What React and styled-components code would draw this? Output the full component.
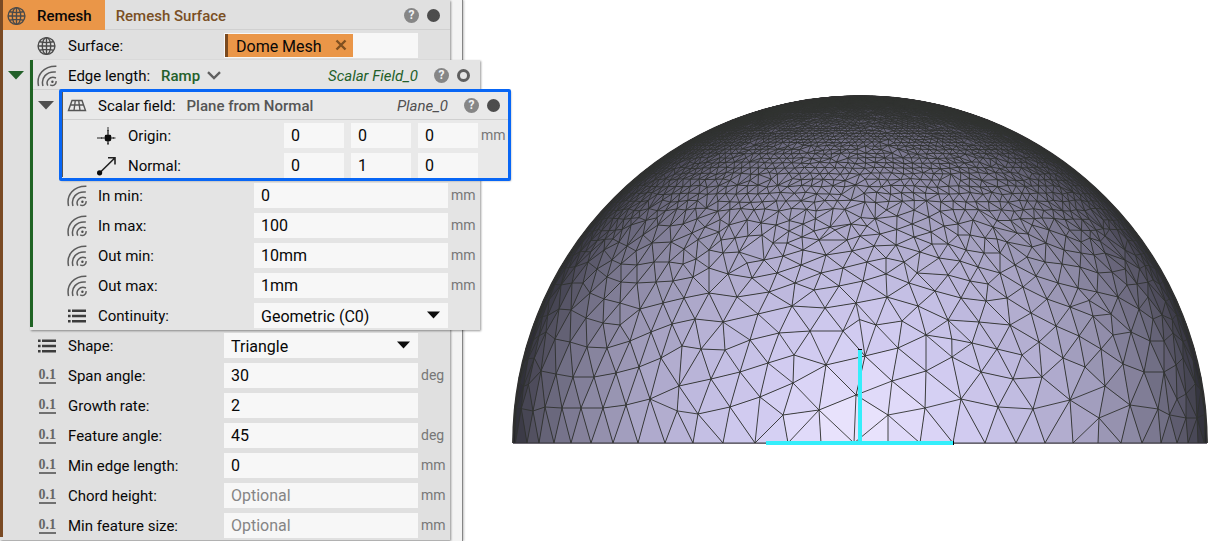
import React, { useId } from "react";
import styled, { createGlobalStyle } from "styled-components";

const GlobalStyle = createGlobalStyle`
  *, *::before, *::after { box-sizing: border-box; }
  body {
    margin: 0;
    background: #fff;
    color: #080808;
    font-family: Roboto, "Liberation Sans", sans-serif;
    font-size: 15px;
    line-height: 20px;
  }
  button, input, select { font: inherit; color: inherit; }
`;

/* ---------- layout ---------- */

const Page = styled.main`
  display: flex;
  min-height: 100vh;
  overflow: hidden;
`;

const Notebook = styled.section`
  flex: 0 0 auto;
  position: relative;
  z-index: 1;
  padding-right: 12px;
  background: #f3f3f3;
  border-right: 1px solid #858585;
  box-shadow: 1px 0 2px rgba(0, 0, 0, 0.25);
`;

const Viewport = styled.section`
  flex: 1 1 0;
  min-width: 0;

  svg { display: block; width: 100%; height: auto; }
`;

const Card = styled.div`
  position: relative;
  flex: 0 0 auto;
  width: 450px;
  padding-left: 3px;
  background:
    linear-gradient(${(p) => p.$accent}, ${(p) => p.$accent}) 0 0 / 3px calc(100% - 3px) no-repeat,
    ${(p) => p.$surface};
  box-shadow: 1px 1px 2px rgba(0, 0, 0, 0.4);
  ${(p) => p.$selected && "outline: 3px solid #0866f5; outline-offset: -2px; border-radius: 1px;"}
`;

const Nested = styled.div`
  display: flex;
  align-items: flex-start;
`;

const Caret = styled.button`
  flex: 0 0 27px;
  height: 30px;
  padding: 0 0 0 5px;
  border: 0;
  background: none;
  color: ${(p) => p.$color};

  svg { display: block; }
`;

const Header = styled.header`
  display: flex;
  align-items: center;
  height: 30px;
  padding: 2px 10px 0 4px;
  border-bottom: 1px solid #d0d0d0;
`;

const TitleTab = styled.h1`
  display: flex;
  align-items: center;
  gap: 10px;
  height: 30px;
  margin: -1px 11px 0 -4px;
  padding: 1px 13px 0 4px;
  background: #ea9648;
  font-size: 15px;
  font-weight: 500;
`;

const HeaderLabel = styled.span`
  margin: 0 11px;
`;

const BlockName = styled.span`
  font-weight: 500;
  color: ${(p) => p.$color};
`;

const KindButton = styled.button`
  display: flex;
  align-items: center;
  gap: 7px;
  padding: 0;
  border: 0;
  background: none;
  font-weight: 500;
  color: #23602a;
`;

const HeaderEnd = styled.div`
  display: flex;
  align-items: center;
  gap: 8px;
  margin-left: auto;
`;

const VariableName = styled.em`
  margin-right: 8px;
  color: ${(p) => p.$color};
`;

const HelpButton = styled.button`
  width: 15px;
  height: 15px;
  padding: 0;
  border: 0;
  border-radius: 50%;
  background: #868686;
  color: #f2f2f2;
  font-size: 12px;
  font-weight: 700;
  line-height: 15px;
`;

const Port = styled.span`
  width: 13px;
  height: 13px;
  border: 3px solid #4d4d4d;
  border-radius: 50%;
  background: ${(p) => (p.$open ? "transparent" : "#4d4d4d")};
  ${(p) => p.$open && "border-color: #5e5e5e;"}
`;

const Row = styled.div`
  display: flex;
  align-items: center;
  height: 30px;
  padding: 1px 0 0 34px;
`;

const IconSlot = styled.span`
  flex: 0 0 20px;
  display: flex;
  justify-content: center;
  color: #4a4a4a;
`;

const RowLabel = styled.label`
  flex: 0 0 156px;
  margin-left: 11px;
`;

const VectorLabel = styled(RowLabel).attrs({ as: "span" })``;

const FieldArea = styled.div`
  position: relative;
  flex: 0 0 194px;
  min-width: 0;
  display: flex;
  gap: 7px;
  font-size: 16px;
`;

const TextInput = styled.input`
  flex: 1 1 0;
  width: 100%;
  min-width: 0;
  height: 25px;
  padding: 0 7px;
  border: 0;
  border-radius: 0;
  background: #f7f7f7;

  &::placeholder { color: #858585; opacity: 1; }
`;

const SelectInput = styled.select`
  flex: 1 1 0;
  height: 25px;
  padding: 2px 7px 0;
  border: 0;
  border-radius: 0;
  appearance: none;
  background: #f7f7f7;
`;

const SelectArrow = styled.svg`
  position: absolute;
  top: 8px;
  right: 8px;
  pointer-events: none;
`;

const Unit = styled.span`
  margin: -1px 0 0 3px;
  font-size: 14px;
  color: #777;
`;

const ChipField = styled.div`
  flex: 1 1 0;
  height: 25px;
  padding: 1px;
  background: #f7f7f7;
`;

const Chip = styled.div`
  display: inline-flex;
  align-items: center;
  gap: 13px;
  height: 23px;
  padding: 2px 6px 0 8px;
  border-left: 3px solid #7a4a20;
  background: #ea9648;
`;

const ChipRemove = styled.button`
  display: flex;
  padding: 0 0 3px;
  border: 0;
  background: none;
  color: #805020;
`;

const NumberGlyph = styled.span`
  width: 17px;
  height: 17px;
  border-bottom: 2px solid #707070;
  color: #666;
  font-family: "Liberation Serif", serif;
  font-size: 14px;
  font-weight: 700;
  line-height: 15px;
  text-align: center;
`;

/* ---------- icons ---------- */

const Globe = () => (
  <svg width="20" height="20" viewBox="0 0 20 20" fill="none" stroke="#4a4a4a" strokeWidth="1.4" aria-hidden="true">
    <circle cx="9.5" cy="10" r="8.4" />
    <ellipse cx="9.5" cy="10" rx="4.2" ry="8.4" />
    <path d="M9.5 1.6V18.4M1.1 10H17.9M2.5 5.8Q9.5 7.4 16.5 5.8M2.5 14.2Q9.5 12.6 16.5 14.2" />
  </svg>
);

const FieldWaves = () => (
  <svg width="20" height="22" viewBox="0 0 20 22" fill="none" stroke="#5c5c5c" strokeWidth="1.5" aria-hidden="true">
    <path d="M1.6 21C-1 10 7 .8 19.4 1.2M6 21C3.6 13 9.6 6 18.8 7" />
    <path d="M10.8 20.6C8.4 16 12.6 10.6 19 13" />
    <path d="M13.2 19.8C16 21.6 19.6 19.4 19 16.2" />
    <circle cx="15.4" cy="16.8" r="1.2" fill="#4a4a4a" stroke="none" />
  </svg>
);

const PlaneGrid = () => (
  <svg width="20" height="14" viewBox="0 0 20 14" fill="none" stroke="#555" strokeWidth="1.4" aria-hidden="true">
    <path d="M5 1.5H15L18.5 11.5H1.5ZM3.4 6H16.6M8.3 1.5L7 11.5M11.7 1.5L13 11.5" />
  </svg>
);

const PointIcon = () => (
  <svg width="20" height="20" viewBox="0 0 20 20" aria-hidden="true">
    <path d="M11 1V5M11 17V19M0 12H5M16 12H18.5" stroke="#666" strokeWidth="1.4" />
    <path d="M11 4V18M4 12H17" stroke="#111" strokeWidth="1.2" />
    <rect x="7.8" y="8.8" width="6.4" height="6.4" rx="1.4" fill="#0c0c0c" />
  </svg>
);

const VectorIcon = () => (
  <svg width="20" height="20" viewBox="0 0 20 20" fill="none" stroke="#222" strokeWidth="1.6" aria-hidden="true">
    <path d="M2.5 17L17.8 2M11 1.8H18V8.6" />
    <circle cx="2.6" cy="16.8" r="2.6" fill="#0c0c0c" stroke="none" />
  </svg>
);

const ListIcon = () => (
  <svg width="18" height="14" viewBox="0 0 18 14" fill="#3c3c3c" aria-hidden="true">
    <path d="M0 .5H2.6V3H0ZM0 5.7H2.6V8.2H0ZM0 10.9H2.6V13.4H0Z" />
    <path d="M4 .5H18V3H4ZM4 5.7H18V8.2H4ZM4 10.9H18V13.4H4Z" />
  </svg>
);

const TriangleDown = () => (
  <svg width="16" height="9" viewBox="0 0 16 9" fill="currentColor" aria-hidden="true">
    <path d="M0 0H16L8 8.5Z" />
  </svg>
);

const Chevron = () => (
  <svg width="14" height="9" viewBox="0 0 14 9" fill="none" stroke="#606060" strokeWidth="2.4" aria-hidden="true">
    <path d="M1 1.2L7 7L13 1.2" />
  </svg>
);

const Cross = () => (
  <svg width="12" height="12" viewBox="0 0 12 12" fill="none" stroke="currentColor" strokeWidth="2.4" aria-hidden="true">
    <path d="M1.5 1.5L10.5 10.5M10.5 1.5L1.5 10.5" />
  </svg>
);

const NumberIcon = () => <NumberGlyph aria-hidden="true">0.1</NumberGlyph>;

/* ---------- form rows ---------- */

function InputRow({ icon, label, value, placeholder, unit }) {
  const id = useId();
  return (
    <Row>
      <IconSlot>{icon}</IconSlot>
      <RowLabel htmlFor={id}>{label}</RowLabel>
      <FieldArea>
        <TextInput id={id} defaultValue={value} placeholder={placeholder} />
      </FieldArea>
      {unit && <Unit>{unit}</Unit>}
    </Row>
  );
}

function SelectRow({ label, value }) {
  const id = useId();
  return (
    <Row>
      <IconSlot><ListIcon /></IconSlot>
      <RowLabel htmlFor={id}>{label}</RowLabel>
      <FieldArea>
        <SelectInput id={id} defaultValue={value}>
          <option>{value}</option>
        </SelectInput>
        <SelectArrow width="13" height="8" viewBox="0 0 13 8" aria-hidden="true">
          <path d="M0 .5H13L6.5 7.5Z" fill="#0c0c0c" />
        </SelectArrow>
      </FieldArea>
    </Row>
  );
}

function VectorRow({ icon, label, values, unit }) {
  return (
    <Row>
      <IconSlot>{icon}</IconSlot>
      <VectorLabel>{label}</VectorLabel>
      <FieldArea>
        {values.map((v, i) => (
          <TextInput key={i} defaultValue={v} aria-label={`${label} ${"XYZ"[i]}`} />
        ))}
      </FieldArea>
      {unit && <Unit>{unit}</Unit>}
    </Row>
  );
}

function HeaderActions({ name, color, open }) {
  return (
    <HeaderEnd>
      {name && <VariableName $color={color}>{name}</VariableName>}
      <HelpButton aria-label="Help">?</HelpButton>
      <Port $open={open} />
    </HeaderEnd>
  );
}

/* ---------- dome mesh ---------- */

const CX = 860;
const CY = 443;
const R = 347;

// Coarse vertices of the dome's lower part, as x,y pairs.
const COARSE = `
527,443 539,443 554,443 571,443 591,443 613,443 638,443 665,443 693,443 723,443 755,443 788,443 821,443 854,443
888,443 920,443 953,443 985,443 1016,443 1045,443 1073,443 1098,443 1121,443 1142,443 1161,443 1177,443 1188,443 1198,443
533,411 545,407 562,408 581,408 603,408 626,405 650,399 698,414 730,407 760,397 783,415 819,410 856,395 793,383
541,371 556,374 573,377 594,377 616,373 639,367 661,358 679,386 711,379 740,372 768,363 826,365 794,355
546,332 555,339 570,342 587,347 607,348 630,341 651,332 672,324 682,346 701,349 725,350 750,340 779,333 810,331 843,331
559,309 571,310 586,318 603,323 620,325 640,309 663,303 684,298 695,319 723,322 758,314 792,306 825,308 856,303
561,285 572,283 583,283 590,293 604,299 620,303 621,282 637,283 656,282 673,281 693,277 709,293 737,297 769,292
795,283 814,290 839,286 607,277 728,274 752,278 777,273 821,273
588,262 597,269 621,264 637,265 654,262 669,262 683,264 696,259 709,268 723,253 739,252 747,263 764,260 783,256
801,265 803,250 826,255 843,268 787,243
604,250 612,260 627,246 636,251 652,243 671,242 684,249 692,233 709,250 721,240 735,238 748,236 762,235 773,243
802,237 819,240 835,230 847,240
643,235 631,225 658,225 670,226 683,224 705,227 719,232 729,225 747,220 761,223 776,225 789,231 803,224 814,231 830,227 851,224
888,415 925,408 961,399 998,407 1033,409 1070,400 1099,418 1130,405 1158,409 1186,418 1177,399 1197,418
892,381 926,371 952,357 981,372 1013,379 1042,377 1085,367 1105,386 1144,372 1164,372 1186,394 1123,364 1176,365
865,356 898,348 926,335 972,343 997,349 1022,355 1039,342 1063,358 1079,336 1101,349 1113,335 1131,332 1150,341 1164,341 1183,358 1173,333
876,325 902,321 948,320 979,322 1010,325 1031,313 1056,326 1070,307 1093,316 1111,314 1139,309 1153,319 1162,315
887,297 918,306 935,291 961,298 986,301 1007,298 1023,287 1047,299 1058,283 1078,288 1097,292 1118,297 1127,285 1137,284 1148,297
863,281 909,283 948,275 970,281 988,284 1000,273 1036,276 1098,273 1112,272 886,274
867,262 904,262 886,258 917,273 852,251 874,246 896,245 920,252 939,258 960,261 966,250 948,244 932,244 978,267
984,253 1000,253 1015,265 1007,242 1027,257 1032,247 1046,243 1045,262 1062,264 1080,267 1064,250 1081,253 1094,255 1105,253 1125,250 1125,260
860,236 880,234 914,237 931,232 958,235 970,235 985,238 997,239 993,227 973,220 958,224 944,226 929,217 912,224 897,216
867,226 1017,233 1032,225 1028,234 1049,230 1066,236 1081,242 1090,238 1105,236`;

function seeded(seed) {
  let s = seed;
  return () => {
    s = (s * 1664525 + 1013904223) % 4294967296;
    return s / 4294967296;
  };
}

function makePoints() {
  const rand = seeded(7);
  const cells = new Map();
  const size = 0.1;
  const key = (p, dx, dy, dz) =>
    `${Math.floor(p[0] / size) + dx},${Math.floor(p[1] / size) + dy},${Math.floor(p[2] / size) + dz}`;
  const points = [];
  const add = (p) => {
    points.push(p);
    const k = key(p, 0, 0, 0);
    if (!cells.has(k)) cells.set(k, []);
    cells.get(k).push(p);
  };
  const isFree = (p, min) => {
    for (let a = -1; a < 2; a++)
      for (let b = -1; b < 2; b++)
        for (let c = -1; c < 2; c++)
          for (const q of cells.get(key(p, a, b, c)) || [])
            if (Math.hypot(p[0] - q[0], p[1] - q[1], p[2] - q[2]) < min) return false;
    return true;
  };
  const edge = (h) => 0.1 - 0.09 * h;

  COARSE.trim().split(/\s+/).forEach((pair) => {
    const [px, py] = pair.split(",").map(Number);
    const x = (px - CX) / R;
    const y = (CY - py) / R;
    add([x, y, Math.sqrt(Math.max(0, 1 - x * x - y * y))]);
  });

  for (let a = 0; a <= Math.PI / 2; a += edge(Math.sin(a))) {
    add([Math.cos(a), Math.sin(a), 0]);
    add([-Math.cos(a), Math.sin(a), 0]);
  }

  for (let a = 0; a < Math.PI / 2 - 0.01; a += edge(Math.sin(a)) * 0.86) {
    const e = edge(Math.sin(a));
    const step = e / Math.cos(a);
    const shift = rand() * step;
    for (let t = shift; t < Math.PI; t += step) {
      const jitter = a === 0 ? 0 : 0.3;
      const lat = Math.max(0, a + (rand() - 0.5) * e * jitter);
      const lon = t + (rand() - 0.5) * step * jitter;
      const p = [Math.cos(lat) * Math.cos(lon), Math.sin(lat), Math.cos(lat) * Math.sin(lon)];
      if (p[2] > 0.01 && isFree(p, e * 0.74)) add(p);
    }
  }
  return points;
}

// Circumcircle of three planar points.
function circle(pts, i, j, k) {
  const [ax, ay] = pts[i];
  const bx = pts[j][0] - ax;
  const by = pts[j][1] - ay;
  const cx = pts[k][0] - ax;
  const cy = pts[k][1] - ay;
  const d = 2 * (bx * cy - by * cx);
  if (Math.abs(d) < 1e-14) return { i, j, k, x: 0, y: 0, r: Infinity, rr: Infinity };
  const b2 = bx * bx + by * by;
  const c2 = cx * cx + cy * cy;
  const ux = (cy * b2 - by * c2) / d;
  const uy = (bx * c2 - cx * b2) / d;
  const rr = ux * ux + uy * uy;
  return { i, j, k, x: ax + ux, y: ay + uy, r: Math.sqrt(rr), rr };
}

// Sweep-line Delaunay triangulation.
function triangulate(input) {
  const n = input.length;
  const pts = input.concat([[-40, -30], [0, 50], [40, -30]]);
  const order = input.map((_, i) => i).sort((a, b) => input[a][0] - input[b][0]);
  let open = [circle(pts, n, n + 1, n + 2)];
  const done = [];
  for (const c of order) {
    const [x, y] = pts[c];
    const count = new Map();
    const keep = [];
    for (const t of open) {
      const dx = x - t.x;
      if (dx > 0 && dx > t.r) {
        done.push(t);
        continue;
      }
      const dy = y - t.y;
      if (dx * dx + dy * dy > t.rr + 1e-12) {
        keep.push(t);
        continue;
      }
      for (const [a, b] of [[t.i, t.j], [t.j, t.k], [t.k, t.i]]) {
        const id = a < b ? a * 100000 + b : b * 100000 + a;
        count.set(id, (count.get(id) || 0) + 1);
      }
    }
    open = keep;
    count.forEach((v, id) => {
      if (v === 1) open.push(circle(pts, Math.floor(id / 100000), id % 100000, c));
    });
  }
  return done.concat(open).filter((t) => t.i < n && t.j < n && t.k < n);
}

function buildMesh() {
  const p = makePoints().map((q) => [
    q[0] + Math.sin(q[1] * 977) * 1e-6,
    q[1],
    q[2],
  ]);
  // Stereographic projection keeps circles on the sphere as circles in the plane.
  const triangles = triangulate(p.map(([x, y, z]) => [x / (1 + z), y / (1 + z)]));
  const sx = (q) => (CX + q[0] * R).toFixed(1);
  const sy = (q) => (CY - q[1] * R).toFixed(1);
  const shades = new Map();
  const edges = new Map();
  triangles.forEach(({ i, j, k }) => {
    const a = p[i];
    const b = p[j];
    const c = p[k];
    const u = b.map((v, m) => v - a[m]);
    const w = c.map((v, m) => v - a[m]);
    const nx = u[1] * w[2] - u[2] * w[1];
    const ny = u[2] * w[0] - u[0] * w[2];
    const nz = u[0] * w[1] - u[1] * w[0];
    const facing = Math.abs(nz) / (Math.hypot(nx, ny, nz) || 1);
    const level = Math.round(facing * 80);
    const d = `M${sx(a)} ${sy(a)}L${sx(b)} ${sy(b)}L${sx(c)} ${sy(c)}Z`;
    shades.set(level, (shades.get(level) || "") + d);
    for (const [s, e] of [[i, j], [j, k], [k, i]]) {
      const id = Math.min(s, e) + "-" + Math.max(s, e);
      edges.set(id, `M${sx(p[s])} ${sy(p[s])}L${sx(p[e])} ${sy(p[e])}`);
    }
  });
  return {
    faces: [...shades].map(([level, d]) => {
      const facing = level / 80;
      const diffuse = Math.pow(facing, 1.1);
      const shine = 16 * Math.pow(facing, 30);
      const mix = (from, to) => Math.round(from + (to - from) * diffuse);
      return {
        d,
        fill: `rgb(${mix(28, 216) + Math.round(shine)}, ${mix(28, 210) + Math.round(shine)}, ${mix(34, 252)})`,
      };
    }),
    wires: [...edges.values()].join(""),
  };
}

const MESH = buildMesh();

function DomeView() {
  return (
    <svg viewBox="463 0 754 541" role="img" aria-label="Remeshed dome">
      <path d={`M${CX - R} ${CY}A${R} ${R} 0 0 1 ${CX + R} ${CY}Z`} fill="#303030" />
      {MESH.faces.map((f) => (
        <path key={f.fill} d={f.d} fill={f.fill} />
      ))}
      <path d={MESH.wires} fill="none" stroke="#303230" strokeWidth="0.9" />
      <path d={`M${CX - R} ${CY}A${R} ${R} 0 0 1 ${CX + R} ${CY}`} fill="none" stroke="#303030" strokeWidth="1.6" />
      <path d={`M${CX - R} ${CY + 0.5}H${CX + R}`} stroke="#6a6670" />
      <path d="M858 349.5H862M953.5 441V445" stroke="#000" />
      <path d="M860 350V443M766 443H953" stroke="#35eefb" strokeWidth="4" />
    </svg>
  );
}

/* ---------- page ---------- */

export default function App() {
  return (
    <>
      <GlobalStyle />
      <Page>
        <Notebook>
          <Card $accent="#7a4a24" $surface="#e0e0e0">
            <Header>
              <TitleTab><Globe />Remesh</TitleTab>
              <BlockName $color="#7a4f24">Remesh Surface</BlockName>
              <HeaderActions />
            </Header>
            <Row>
              <IconSlot><Globe /></IconSlot>
              <VectorLabel>Surface:</VectorLabel>
              <FieldArea>
                <ChipField>
                  <Chip>
                    Dome Mesh
                    <ChipRemove aria-label="Remove Dome Mesh"><Cross /></ChipRemove>
                  </Chip>
                </ChipField>
              </FieldArea>
            </Row>

            <Nested>
              <Caret $color="#23602a" aria-label="Collapse edge length"><TriangleDown /></Caret>
              <Card $accent="#1f6324" $surface="#e4e4e4">
                <Header>
                  <IconSlot><FieldWaves /></IconSlot>
                  <HeaderLabel>Edge length:</HeaderLabel>
                  <KindButton>Ramp<Chevron /></KindButton>
                  <HeaderActions name="Scalar Field_0" color="#23602a" open />
                </Header>

                <Nested>
                  <Caret $color="#505050" aria-label="Collapse scalar field"><TriangleDown /></Caret>
                  <Card $accent="#555" $surface="#e9e9e9" $selected>
                    <Header>
                      <IconSlot><PlaneGrid /></IconSlot>
                      <HeaderLabel>Scalar field:</HeaderLabel>
                      <BlockName $color="#555">Plane from Normal</BlockName>
                      <HeaderActions name="Plane_0" color="#505050" />
                    </Header>
                    <VectorRow icon={<PointIcon />} label="Origin:" values={["0", "0", "0"]} unit="mm" />
                    <VectorRow icon={<VectorIcon />} label="Normal:" values={["0", "1", "0"]} />
                  </Card>
                </Nested>

                <InputRow icon={<FieldWaves />} label="In min:" value="0" unit="mm" />
                <InputRow icon={<FieldWaves />} label="In max:" value="100" unit="mm" />
                <InputRow icon={<FieldWaves />} label="Out min:" value="10mm" unit="mm" />
                <InputRow icon={<FieldWaves />} label="Out max:" value="1mm" unit="mm" />
                <SelectRow label="Continuity:" value="Geometric (C0)" />
              </Card>
            </Nested>

            <SelectRow label="Shape:" value="Triangle" />
            <InputRow icon={<NumberIcon />} label="Span angle:" value="30" unit="deg" />
            <InputRow icon={<NumberIcon />} label="Growth rate:" value="2" />
            <InputRow icon={<NumberIcon />} label="Feature angle:" value="45" unit="deg" />
            <InputRow icon={<NumberIcon />} label="Min edge length:" value="0" unit="mm" />
            <InputRow icon={<NumberIcon />} label="Chord height:" placeholder="Optional" unit="mm" />
            <InputRow icon={<NumberIcon />} label="Min feature size:" placeholder="Optional" unit="mm" />
          </Card>
        </Notebook>
        <Viewport>
          <DomeView />
        </Viewport>
      </Page>
    </>
  );
}
